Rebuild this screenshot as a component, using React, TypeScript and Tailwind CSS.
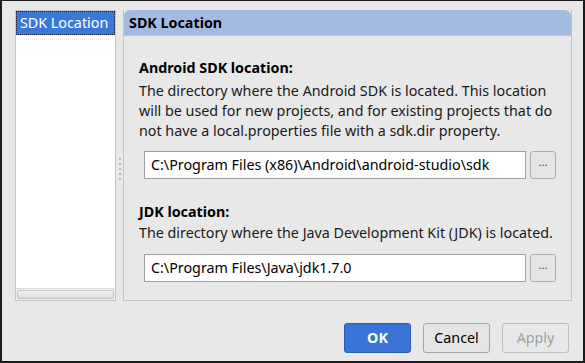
import { useState } from "react";

const font = { fontFamily: '"Noto Sans", "Open Sans", sans-serif' };

function PathField({ value }: { value: string }) {
  return (
    <div className="flex items-center gap-[4px]">
      <div className="flex h-[28px] w-[382px] items-center border border-[#a0a0a0] bg-white px-[6px] text-[14.3px] text-black">
        {value}
      </div>
      <button className="flex h-[28px] w-[26px] items-center justify-center rounded-[3px] border border-[#adadad] bg-[#e5e5e5] pb-[6px] text-[11px] text-[#444]">
        ...
      </button>
    </div>
  );
}

export default function App() {
  const [selected] = useState("SDK Location");
  return (
    <div
      className="flex h-[363px] w-[585px] flex-col border-t border-r-2 border-b-2 border-l-2 border-[#1c1c1c] bg-[#e8e8e8] text-[14.3px] text-[#1a1a1a]"
      style={font}
    >
      <div className="flex flex-1 pt-[9px] pl-[13px] pr-[11px]">
        <div className="flex h-[291px] w-[101px] flex-col border border-[#c4c4c4] bg-white">
          <div className="flex h-[24px] items-center border border-dotted border-[#1a1a3a] bg-[#3a78d8] px-[3px] text-white">
            {selected}
          </div>
          <div className="flex-1" />
          <div className="border-t border-[#dcdcdc] bg-[#f0f0f0] px-[1px] py-[1px]">
            <div className="h-[9px] rounded-[2px] border border-[#c4c4c4] bg-gradient-to-b from-[#f2f2f2] to-[#dcdcdc]" />
          </div>
        </div>
        <div className="flex w-[7px] items-center justify-center">
          <div className="grid grid-cols-1 gap-[3px] pt-[4px]">
            {[0, 1, 2, 3, 4].map((i) => (
              <div key={i} className="h-[2px] w-[2px] bg-[#b8b8b8]" />
            ))}
          </div>
        </div>
        <div className="flex h-[291px] flex-1 flex-col border border-t-0 border-[#c4c4c4]">
          <div className="flex h-[26px] items-center rounded-t-[6px] border-b border-[#c4c4c4] bg-[#a3bbe0] px-[5px] font-bold text-black">
            SDK Location
          </div>
          <div className="flex flex-col pl-[15px] pt-[22px]">
            <div className="font-bold leading-[20px] text-black">Android SDK location:</div>
            <div className="mt-[3px] leading-[20px]">
              The directory where the Android SDK is located. This location
              <br />
              will be used for new projects, and for existing projects that do
              <br />
              not have a local.properties file with a sdk.dir property.
            </div>
            <div className="mt-[10px] pl-[5px]">
              <PathField value="C:\Program Files (x86)\Android\android-studio\sdk" />
            </div>
            <div className="mt-[23px] font-bold leading-[20px] text-black">JDK location:</div>
            <div className="mt-[1px] leading-[20px]">
              The directory where the Java Development Kit (JDK) is located.
            </div>
            <div className="mt-[11px] pl-[5px]">
              <PathField value="C:\Program Files\Java\jdk1.7.0" />
            </div>
          </div>
        </div>
      </div>
      <div className="flex justify-end gap-[12px] pb-[8px] pr-[14px]">
        <button className="h-[30px] w-[67px] rounded-[3px] border border-[#2a5cb0] bg-[#3a74d6] font-bold text-white">
          OK
        </button>
        <button className="h-[30px] w-[67px] rounded-[3px] border border-[#a8a8a8] bg-[#e4e4e4] text-black">
          Cancel
        </button>
        <button className="h-[30px] w-[67px] rounded-[3px] border border-[#bcbcbc] bg-[#e8e8e8] text-[#a0a0a0]">
          Apply
        </button>
      </div>
    </div>
  );
}
